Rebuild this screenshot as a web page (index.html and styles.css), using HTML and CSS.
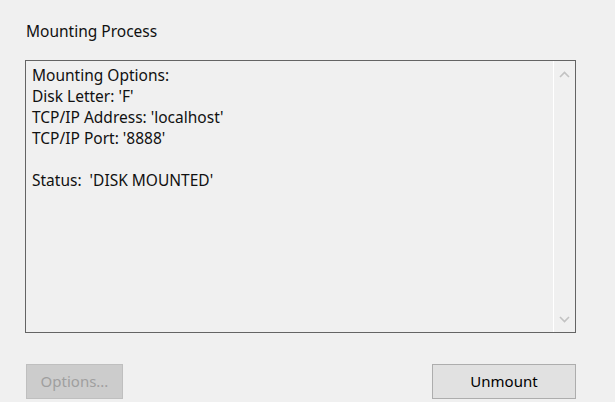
FILE: index.html
```html
<!DOCTYPE html>
<html>
<head>
<meta charset="utf-8">
<link rel="stylesheet" href="styles.css">
</head>
<body>
<div class="dialog">
  <div class="title">Mounting Process</div>
  <div class="textbox">
    <div class="text">
      <div>Mounting Options:</div>
      <div>Disk Letter: 'F'</div>
      <div>TCP/IP Address: 'localhost'</div>
      <div>TCP/IP Port: '8888'</div>
      <div>&nbsp;</div>
      <div>Status:&nbsp; 'DISK MOUNTED'</div>
    </div>
    <div class="scrollbar">
      <svg class="arrow" width="11" height="7" viewBox="0 0 11 7"><path d="M1 6 L5.5 1.5 L10 6" fill="none" stroke="#c2c2c2" stroke-width="1.6"/></svg>
      <svg class="arrow" width="11" height="7" viewBox="0 0 11 7"><path d="M1 1 L5.5 5.5 L10 1" fill="none" stroke="#c2c2c2" stroke-width="1.6"/></svg>
    </div>
  </div>
  <div class="buttons">
    <button class="btn disabled" disabled>Options...</button>
    <button class="btn primary">Unmount</button>
  </div>
</div>
</body>
</html>
```
FILE: styles.css
```css
html, body {
  margin: 0;
  padding: 0;
  background: #f0f0f0;
}
body {
  width: 615px;
  height: 402px;
  overflow: hidden;
  font-family: "Noto Sans", "Open Sans", sans-serif;
  font-size: 15.5px;
  color: #111;
}
.dialog {
  display: flex;
  flex-direction: column;
  padding: 21px 0 0 25px;
  width: 551px;
}
.title {
  padding-left: 1px;
  line-height: 20px;
  height: 20px;
  margin-bottom: 19px;
}
.textbox {
  display: flex;
  height: 271px;
  border: 1px solid #646464;
  background: #f0f0f0;
}
.text {
  flex: 1;
  padding: 4px 0 0 6px;
  line-height: 21px;
}
.scrollbar {
  width: 21px;
  border-left: 1px solid #ffffff;
  display: flex;
  flex-direction: column;
  justify-content: space-between;
  align-items: center;
  padding: 10px 0 9px;
}
.arrow {
  display: block;
}
.buttons {
  display: flex;
  justify-content: space-between;
  margin-top: 31px;
}
.btn {
  font-family: inherit;
  font-size: 15px;
  height: 35px;
  padding: 0 0 2px;
  margin: 0;
}
.btn.disabled {
  width: 97px;
  margin-left: 1px;
  background: #cccccc;
  border: 1px solid #bfbfbf;
  color: #9f9f9f;
}
.btn.primary {
  width: 144px;
  background: #e1e1e1;
  border: 1px solid #adadad;
  color: #000;
}
```
